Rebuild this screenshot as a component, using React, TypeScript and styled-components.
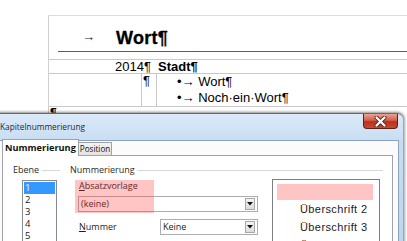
import React from 'react';
import styled, { createGlobalStyle } from 'styled-components';

const GlobalStyle = createGlobalStyle`
  html, body {
    margin: 0;
    padding: 0;
    background: #fff;
  }
  body {
    width: 407px;
    height: 241px;
    overflow: hidden;
  }
`;

const Screen = styled.div`
  width: 407px;
  height: 241px;
  overflow: hidden;
  display: flex;
  flex-direction: column;
  background: #fff;
`;

/* ---------- document behind the dialog ---------- */

const Document = styled.div`
  height: 113px;
  flex-shrink: 0;
  overflow: hidden;
  padding: 15px 0 0 48px;
  box-sizing: border-box;
  font-family: 'Liberation Sans', Arial, sans-serif;
  color: #000;
`;

const Page = styled.div`
  height: 100%;
  border-left: 1px solid #d0d0d0;
  border-top: 1px solid #dcdcdc;
`;

const Heading = styled.div`
  margin-left: 9px;
  height: 36px;
  box-sizing: border-box;
  border-bottom: 1px solid #5e5e5e;
  display: flex;
  align-items: flex-end;
  padding: 0 0 3px 24px;
`;

const Arrow = styled.span`
  font-size: 13px;
  line-height: 14px;
  width: 34px;
  margin-bottom: 4px;
  color: #222;
`;

const HeadingWord = styled.span`
  font-size: 18px;
  font-weight: 900;
  line-height: 20px;
  letter-spacing: 0.3px;
  -webkit-text-stroke: 0.3px #000;
`;

const Table = styled.div`
  margin-top: 7px;
  border-top: 1px solid #c8c8c8;
`;

const Row = styled.div<{ $h: number }>`
  height: ${(p) => p.$h}px;
  display: flex;
  border-bottom: 1px solid #c8c8c8;
  font-size: 13px;
  line-height: 13px;
`;

const Cell = styled.div<{ $w?: number; $line?: boolean; $right?: boolean; $pl?: number }>`
  ${(p) => (p.$w ? `width: ${p.$w}px; flex-shrink: 0;` : 'flex: 1;')}
  ${(p) => (p.$line ? 'border-right: 1px solid #c8c8c8;' : '')}
  text-align: ${(p) => (p.$right ? 'right' : 'left')};
  padding-left: ${(p) => p.$pl ?? 0}px;
  box-sizing: border-box;
`;

const Bold = styled.span`
  font-weight: bold;
`;

const BulletLine = styled.div`
  line-height: 16px;
  white-space: nowrap;
`;

const Pilcrow = styled.div`
  font-size: 12px;
  font-weight: bold;
  line-height: 12px;
  padding-left: 1px;
`;

/* ---------- dialog ---------- */

const Dialog = styled.div`
  position: relative;
  flex: 1;
  margin-left: -8px;
  width: 411px;
  display: flex;
  flex-direction: column;
  border-top: 1px solid #5d6b79;
  border-top-right-radius: 6px;
  background: linear-gradient(#dbe9f8, #c6dcf2 30px, #bcd5ef);
  box-shadow: 0 -1px 3px rgba(0, 0, 0, 0.35), 2px 0 3px rgba(0, 0, 0, 0.3);
  font-family: 'Open Sans', 'Noto Sans', sans-serif;
  font-size: 9px;
  color: #1e1e1e;
`;

const TitleBar = styled.div`
  height: 26px;
  display: flex;
  align-items: flex-start;
`;

const Title = styled.span`
  padding-left: 8px;
  line-height: 25px;
  font-size: 8.3px;
  color: #1b2a3a;
`;

const CloseButton = styled.div`
  margin-left: auto;
  margin-right: 5px;
  width: 35px;
  height: 15px;
  box-sizing: border-box;
  border: 1px solid #5a2118;
  border-top: none;
  border-radius: 0 0 4px 4px;
  background: linear-gradient(#e8a497, #d45f48 45%, #b8321d 55%, #c94a30);
  display: flex;
  align-items: center;
  justify-content: center;
`;

const Client = styled.div`
  flex: 1;
  margin-right: 4px;
  background: #fbfbfb;
  border-top: 1px solid #8ea3bb;
  border-right: 1px solid #8ea3bb;
  display: flex;
  flex-direction: column;
  padding-left: 10px;
`;

const Tabs = styled.div`
  height: 15px;
  display: flex;
  align-items: flex-end;
  margin-top: -1px;
`;

const Tab = styled.div<{ $active?: boolean }>`
  box-sizing: border-box;
  height: ${(p) => (p.$active ? 17 : 13)}px;
  padding: 0 ${(p) => (p.$active ? 2 : 1)}px;
  border: 1px solid #a0a3aa;
  border-bottom: none;
  margin-right: ${(p) => (p.$active ? -1 : 0)}px;
  margin-bottom: ${(p) => (p.$active ? -1 : 0)}px;
  position: relative;
  z-index: ${(p) => (p.$active ? 2 : 1)};
  background: ${(p) => (p.$active ? '#fff' : 'linear-gradient(#f3f3f3, #e2e2e2)')};
  font-weight: ${(p) => (p.$active ? 'bold' : 'normal')};
  font-size: ${(p) => (p.$active ? 9.2 : 8.1)}px;
  line-height: ${(p) => (p.$active ? 15 : 12)}px;
  white-space: nowrap;
  color: #111;
`;

const Panel = styled.div`
  flex: 1;
  margin-right: 5px;
  background: #fff;
  border: 1px solid #a0a3aa;
  border-bottom: none;
  display: flex;
  padding: 8px 9px 0 10px;
`;

const Group = styled.div<{ $w?: number; $ml?: number }>`
  ${(p) => (p.$w ? `width: ${p.$w}px; flex-shrink: 0;` : 'flex: 1;')}
  margin-left: ${(p) => p.$ml ?? 0}px;
  display: flex;
  flex-direction: column;
`;

const GroupTitle = styled.div`
  display: flex;
  align-items: center;
  line-height: 12px;
  color: #2a2a2a;

  &::after {
    content: '';
    flex: 1;
    margin-left: 3px;
    border-top: 1px solid #d5d9de;
  }
`;

const ListBox = styled.div`
  margin: 4px 0 0 9px;
  width: 35px;
  flex: 1;
  box-sizing: border-box;
  border: 1px solid #868a91;
  border-bottom: none;
  padding: 1px 1px 0;
`;

const ListItem = styled.div<{ $selected?: boolean }>`
  height: 12px;
  line-height: 12px;
  padding-left: 1px;
  font-size: 9.5px;
  overflow: hidden;
  background: ${(p) => (p.$selected ? '#3399ff' : 'transparent')};
  color: ${(p) => (p.$selected ? '#fff' : '#1a1a1a')};
`;

const GroupBody = styled.div`
  flex: 1;
  display: flex;
  margin-left: 8px;
  margin-top: 3px;
`;

const Form = styled.div`
  position: relative;
  width: 180px;
  display: flex;
  flex-direction: column;
`;

const FieldLabel = styled.div`
  line-height: 12px;
  margin: 1px 0 0 1px;
  color: #1a1a1a;

  u {
    text-decoration: underline;
  }
`;

const Combo = styled.div<{ $w: number; $mt: number }>`
  margin-top: ${(p) => p.$mt}px;
  width: ${(p) => p.$w}px;
  height: 16px;
  box-sizing: border-box;
  border: 1px solid #abadb3;
  background: #fff;
  display: flex;
  align-items: center;
  padding: 0 2px 0 2px;
  color: #1a1a1a;
`;

const ComboText = styled.span`
  flex: 1;
  line-height: 14px;
`;

const DropButton = styled.div`
  width: 10px;
  height: 12px;
  box-sizing: border-box;
  border: 1px solid #a7a7a7;
  background: linear-gradient(#f4f4f4, #dcdcdc);
  display: flex;
  align-items: center;
  justify-content: center;
`;

const NumberRow = styled.div`
  margin-top: 7px;
  display: flex;
  align-items: center;
`;

const NumberLabel = styled.div`
  width: 81px;
  padding-left: 1px;
  line-height: 12px;
`;

const Highlight = styled.div`
  position: absolute;
  left: -3px;
  top: 1px;
  width: 79px;
  height: 33px;
  background: rgba(255, 60, 60, 0.3);
  pointer-events: none;
`;

const Preview = styled.div`
  margin-left: 14px;
  width: 108px;
  box-sizing: border-box;
  border: 1px solid #7d7f85;
  border-bottom: none;
  background: #fff;
  padding: 4px 6px 0 4px;
  font-family: 'Liberation Sans', Arial, sans-serif;
  font-size: 11px;
  color: #1a1a1a;
  overflow: hidden;
`;

const PreviewBar = styled.div`
  height: 16px;
  background: #ffc4c4;
`;

const PreviewLine = styled.div`
  line-height: 18px;
  padding-left: 23px;
  letter-spacing: 0.4px;
  white-space: nowrap;
`;

const DropArrow = () => (
  <svg width="6" height="4" viewBox="0 0 6 4">
    <path d="M0 0 H6 L3 3.5 Z" fill="#111" />
  </svg>
);

const CloseGlyph = () => (
  <svg width="13" height="11" viewBox="0 0 13 11">
    <path d="M2.5 1.5 L10.5 9.5 M10.5 1.5 L2.5 9.5" stroke="#5b2a22" strokeWidth="4" strokeLinecap="round" />
    <path d="M2.5 1.5 L10.5 9.5 M10.5 1.5 L2.5 9.5" stroke="#fff" strokeWidth="2.2" strokeLinecap="round" />
  </svg>
);

const App: React.FC = () => {
  const levels = ['1', '2', '3', '4', '5'];

  return (
    <>
      <GlobalStyle />
      <Screen>
        <Document>
          <Page>
            <Heading>
              <Arrow>→</Arrow>
              <HeadingWord>Wort¶</HeadingWord>
            </Heading>
            <Table>
              <Row $h={13}>
                <Cell $w={102} $right>2014¶</Cell>
                <Cell $pl={7}>
                  <Bold>Stadt¶</Bold>
                </Cell>
              </Row>
              <Row $h={32}>
                <Cell $w={93} $line />
                <Cell $w={15} $line $pl={1}>¶</Cell>
                <Cell $pl={20}>
                  <BulletLine>•→ Wort¶</BulletLine>
                  <BulletLine>•→ Noch·ein·Wort¶</BulletLine>
                </Cell>
              </Row>
            </Table>
            <Pilcrow>¶</Pilcrow>
          </Page>
        </Document>

        <Dialog>
          <TitleBar>
            <Title>Kapitelnummerierung</Title>
            <CloseButton>
              <CloseGlyph />
            </CloseButton>
          </TitleBar>
          <Client>
            <Tabs>
              <Tab $active>Nummerierung</Tab>
              <Tab>Position</Tab>
            </Tabs>
            <Panel>
              <Group $w={47}>
                <GroupTitle>Ebene</GroupTitle>
                <ListBox>
                  {levels.map((l, i) => (
                    <ListItem key={l} $selected={i === 0}>
                      {l}
                    </ListItem>
                  ))}
                </ListBox>
              </Group>
              <Group $ml={10}>
                <GroupTitle>Nummerierung</GroupTitle>
                <GroupBody>
                  <Form>
                    <FieldLabel>
                      <u>A</u>bsatzvorlage
                    </FieldLabel>
                    <Combo $w={180} $mt={4}>
                      <ComboText>(keine)</ComboText>
                      <DropButton>
                        <DropArrow />
                      </DropButton>
                    </Combo>
                    <NumberRow>
                      <NumberLabel>
                        <u>N</u>ummer
                      </NumberLabel>
                      <Combo $w={98} $mt={0}>
                        <ComboText>Keine</ComboText>
                        <DropButton>
                          <DropArrow />
                        </DropButton>
                      </Combo>
                    </NumberRow>
                    <Highlight />
                  </Form>
                  <Preview>
                    <PreviewBar />
                    <PreviewLine>Überschrift 2</PreviewLine>
                    <PreviewLine>Überschrift 3</PreviewLine>
                    <PreviewLine>Überschrift 4</PreviewLine>
                  </Preview>
                </GroupBody>
              </Group>
            </Panel>
          </Client>
        </Dialog>
      </Screen>
    </>
  );
};

export default App;
